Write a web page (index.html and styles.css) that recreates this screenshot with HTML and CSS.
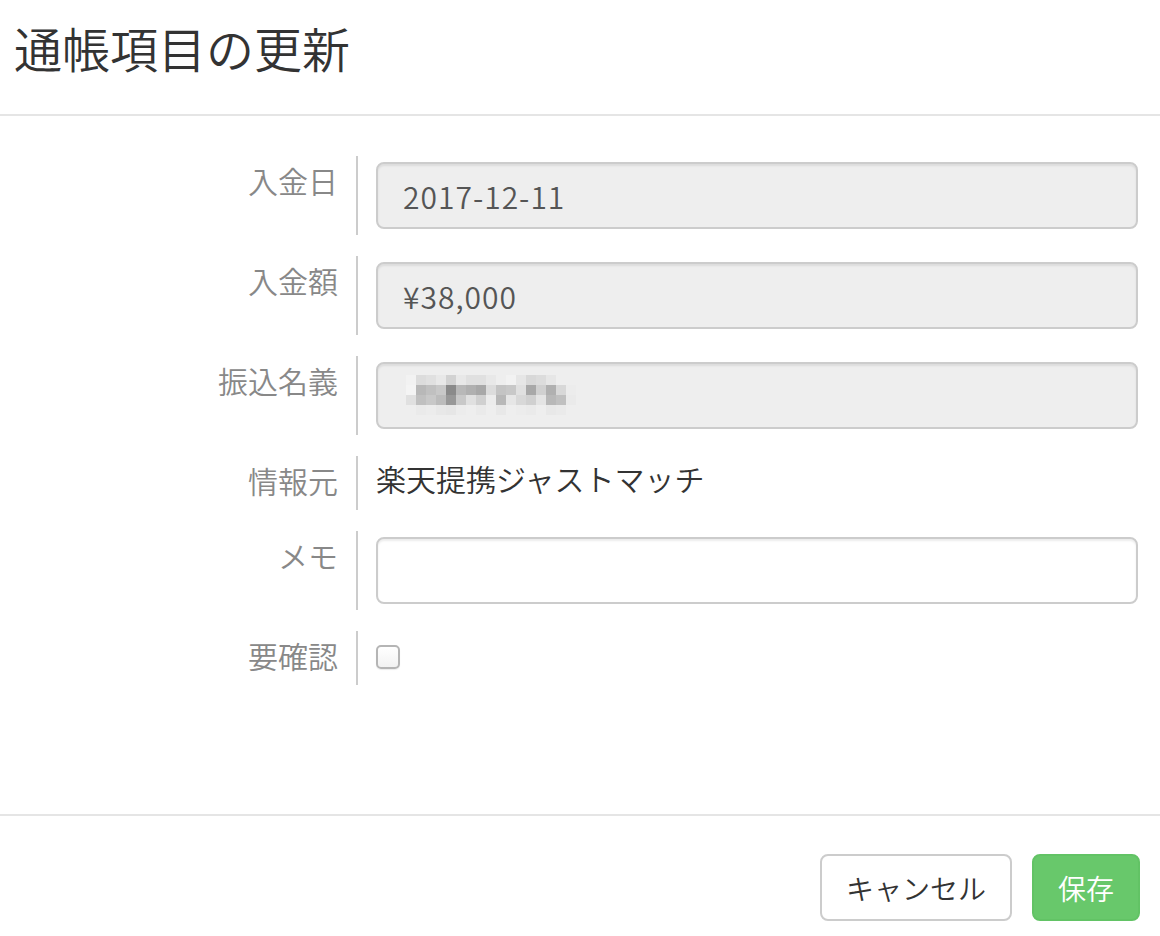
FILE: index.html
```html
<!DOCTYPE html>
<html lang="ja">
<head>
    <meta charset="UTF-8">
    <meta name="viewport" content="width=device-width, initial-scale=1.0">
    <title>通帳項目の更新</title>
    <link rel="stylesheet" href="styles.css">
</head>
<body>
    <div class="modal">
        <div class="modal-header">
            <h4 class="modal-title">通帳項目の更新</h4>
        </div>
        <form class="modal-body" id="bankItemForm">
            <div class="form-group">
                <label class="form-label" for="depositDate">入金日</label>
                <div class="form-field">
                    <input type="text" id="depositDate" class="form-input" value="2017-12-11" readonly>
                </div>
            </div>
            <div class="form-group">
                <label class="form-label" for="amount">入金額</label>
                <div class="form-field">
                    <input type="text" id="amount" class="form-input" value="¥38,000" readonly>
                </div>
            </div>
            <div class="form-group">
                <label class="form-label" for="payer">振込名義</label>
                <div class="form-field">
                    <div class="form-input masked" id="payer">
                        <!-- 振込名義はモザイク表示 -->
                        <svg class="mosaic" width="220" height="40" viewBox="0 0 20 4" shape-rendering="crispEdges">
                            <g id="mosaicCells"></g>
                        </svg>
                    </div>
                </div>
            </div>
            <div class="form-group">
                <label class="form-label">情報元</label>
                <div class="form-field">
                    <p class="form-static">楽天提携ジャストマッチ</p>
                </div>
            </div>
            <div class="form-group">
                <label class="form-label" for="memo">メモ</label>
                <div class="form-field">
                    <input type="text" id="memo" class="form-input editable">
                </div>
            </div>
            <div class="form-group">
                <label class="form-label" for="needsCheck">要確認</label>
                <div class="form-field">
                    <input type="checkbox" id="needsCheck" class="form-check">
                </div>
            </div>
        </form>
        <div class="modal-footer">
            <button type="button" class="btn btn-default">キャンセル</button>
            <button type="submit" form="bankItemForm" class="btn btn-success">保存</button>
        </div>
    </div>

    <script>
        // モザイクの濃淡（行ごと）
        const rows = [
            ['f2', 'dc', 'e0', 'e8', 'd2', 'e8', 'e0', 'e0', 'e8', 'ee', 'f2', 'e6', 'd8', 'dc', 'e6', 'ee', 'ee', 'ee'],
            ['f4', 'b8', 'c0', 'c8', '8a', 'b8', 'b0', 'a8', 'dc', 'c4', 'c8', 'e0', 'a8', 'd0', 'b0', 'd8', 'ec', 'ee'],
            ['e0', 'c0', 'c8', 'bc', '98', 'c8', 'e0', 'd0', 'ec', 'b8', 'e6', 'd8', 'd0', 'e4', 'b8', 'c0', 'ea', 'ee'],
            ['ee', 'ea', 'ec', 'e8', 'e6', 'ec', 'ee', 'ea', 'ee', 'e8', 'ee', 'ec', 'ea', 'ee', 'e8', 'ea', 'ee', 'ee']
        ];
        const cells = document.getElementById('mosaicCells');
        rows.forEach((row, y) => {
            row.forEach((v, x) => {
                const rect = document.createElementNS('http://www.w3.org/2000/svg', 'rect');
                rect.setAttribute('x', x);
                rect.setAttribute('y', y);
                rect.setAttribute('width', 1);
                rect.setAttribute('height', 1);
                rect.setAttribute('fill', '#' + v + v + v);
                cells.appendChild(rect);
            });
        });

        document.getElementById('bankItemForm').addEventListener('submit', (event) => {
            event.preventDefault();
        });
    </script>
</body>
</html>
```

FILE: styles.css
```css
body {
    margin: 0;
    background: white;
    font-family: "Noto Sans CJK JP", sans-serif;
    font-weight: 350;
    color: #333;
}
.modal {
    width: 1160px;
}
.modal-header {
    padding: 18px 14px 38px;
    border-bottom: 2px solid #e5e5e5;
}
.modal-title {
    margin: 0;
    font-size: 48px;
    font-weight: 350;
    line-height: 58px;
    color: #333;
}
.modal-body {
    height: 698px;
    box-sizing: border-box;
    padding: 40px 22px 0 0;
    margin: 0;
}
.form-group {
    display: flex;
    margin-bottom: 21px;
}
.form-label {
    width: 358px;
    box-sizing: border-box;
    flex-shrink: 0;
    padding: 4px 18px 10px 0;
    border-right: 2px solid #ccc;
    text-align: right;
    font-size: 30px;
    line-height: 40px;
    color: #888;
}
.form-field {
    flex: 1;
    padding: 6px 0 6px 18px;
    display: flex;
    align-items: flex-start;
}
.form-input {
    width: 100%;
    height: 67px;
    box-sizing: border-box;
    margin: 0;
    padding: 0 25px;
    border: 2px solid #ccc;
    border-radius: 8px;
    background: #eee;
    box-shadow: inset 0 2px 2px rgba(0, 0, 0, 0.075);
    font-family: inherit;
    font-weight: inherit;
    font-size: 30px;
    letter-spacing: 1px;
    color: #555;
    outline: none;
}
.form-input.editable {
    background: white;
}
.masked {
    display: flex;
    align-items: center;
    padding-left: 18px;
}
.mosaic {
    display: block;
    margin-top: -2px;
}
.form-static {
    margin: 0;
    padding: 0 0 2px;
    font-size: 30px;
    line-height: 40px;
    color: #333;
    position: relative;
    top: -4px;
}
.form-check {
    appearance: none;
    width: 24px;
    height: 24px;
    margin: 8px 0 0;
    border: 2px solid #b5b5b5;
    border-radius: 5px;
    background: linear-gradient(#fff, #f2f2f2);
    box-shadow: 0 1px 1px rgba(0, 0, 0, 0.08);
}
.modal-footer {
    display: flex;
    justify-content: flex-end;
    gap: 20px;
    padding: 38px 20px 0;
    border-top: 2px solid #e5e5e5;
}
.btn {
    height: 67px;
    padding: 0 24px;
    border-radius: 8px;
    font-family: inherit;
    font-weight: inherit;
    font-size: 28px;
    cursor: pointer;
}
.btn-default {
    background: white;
    border: 2px solid #ccc;
    color: #333;
}
.btn-success {
    background: #68c86b;
    border: 2px solid #62c365;
    color: white;
}
```
